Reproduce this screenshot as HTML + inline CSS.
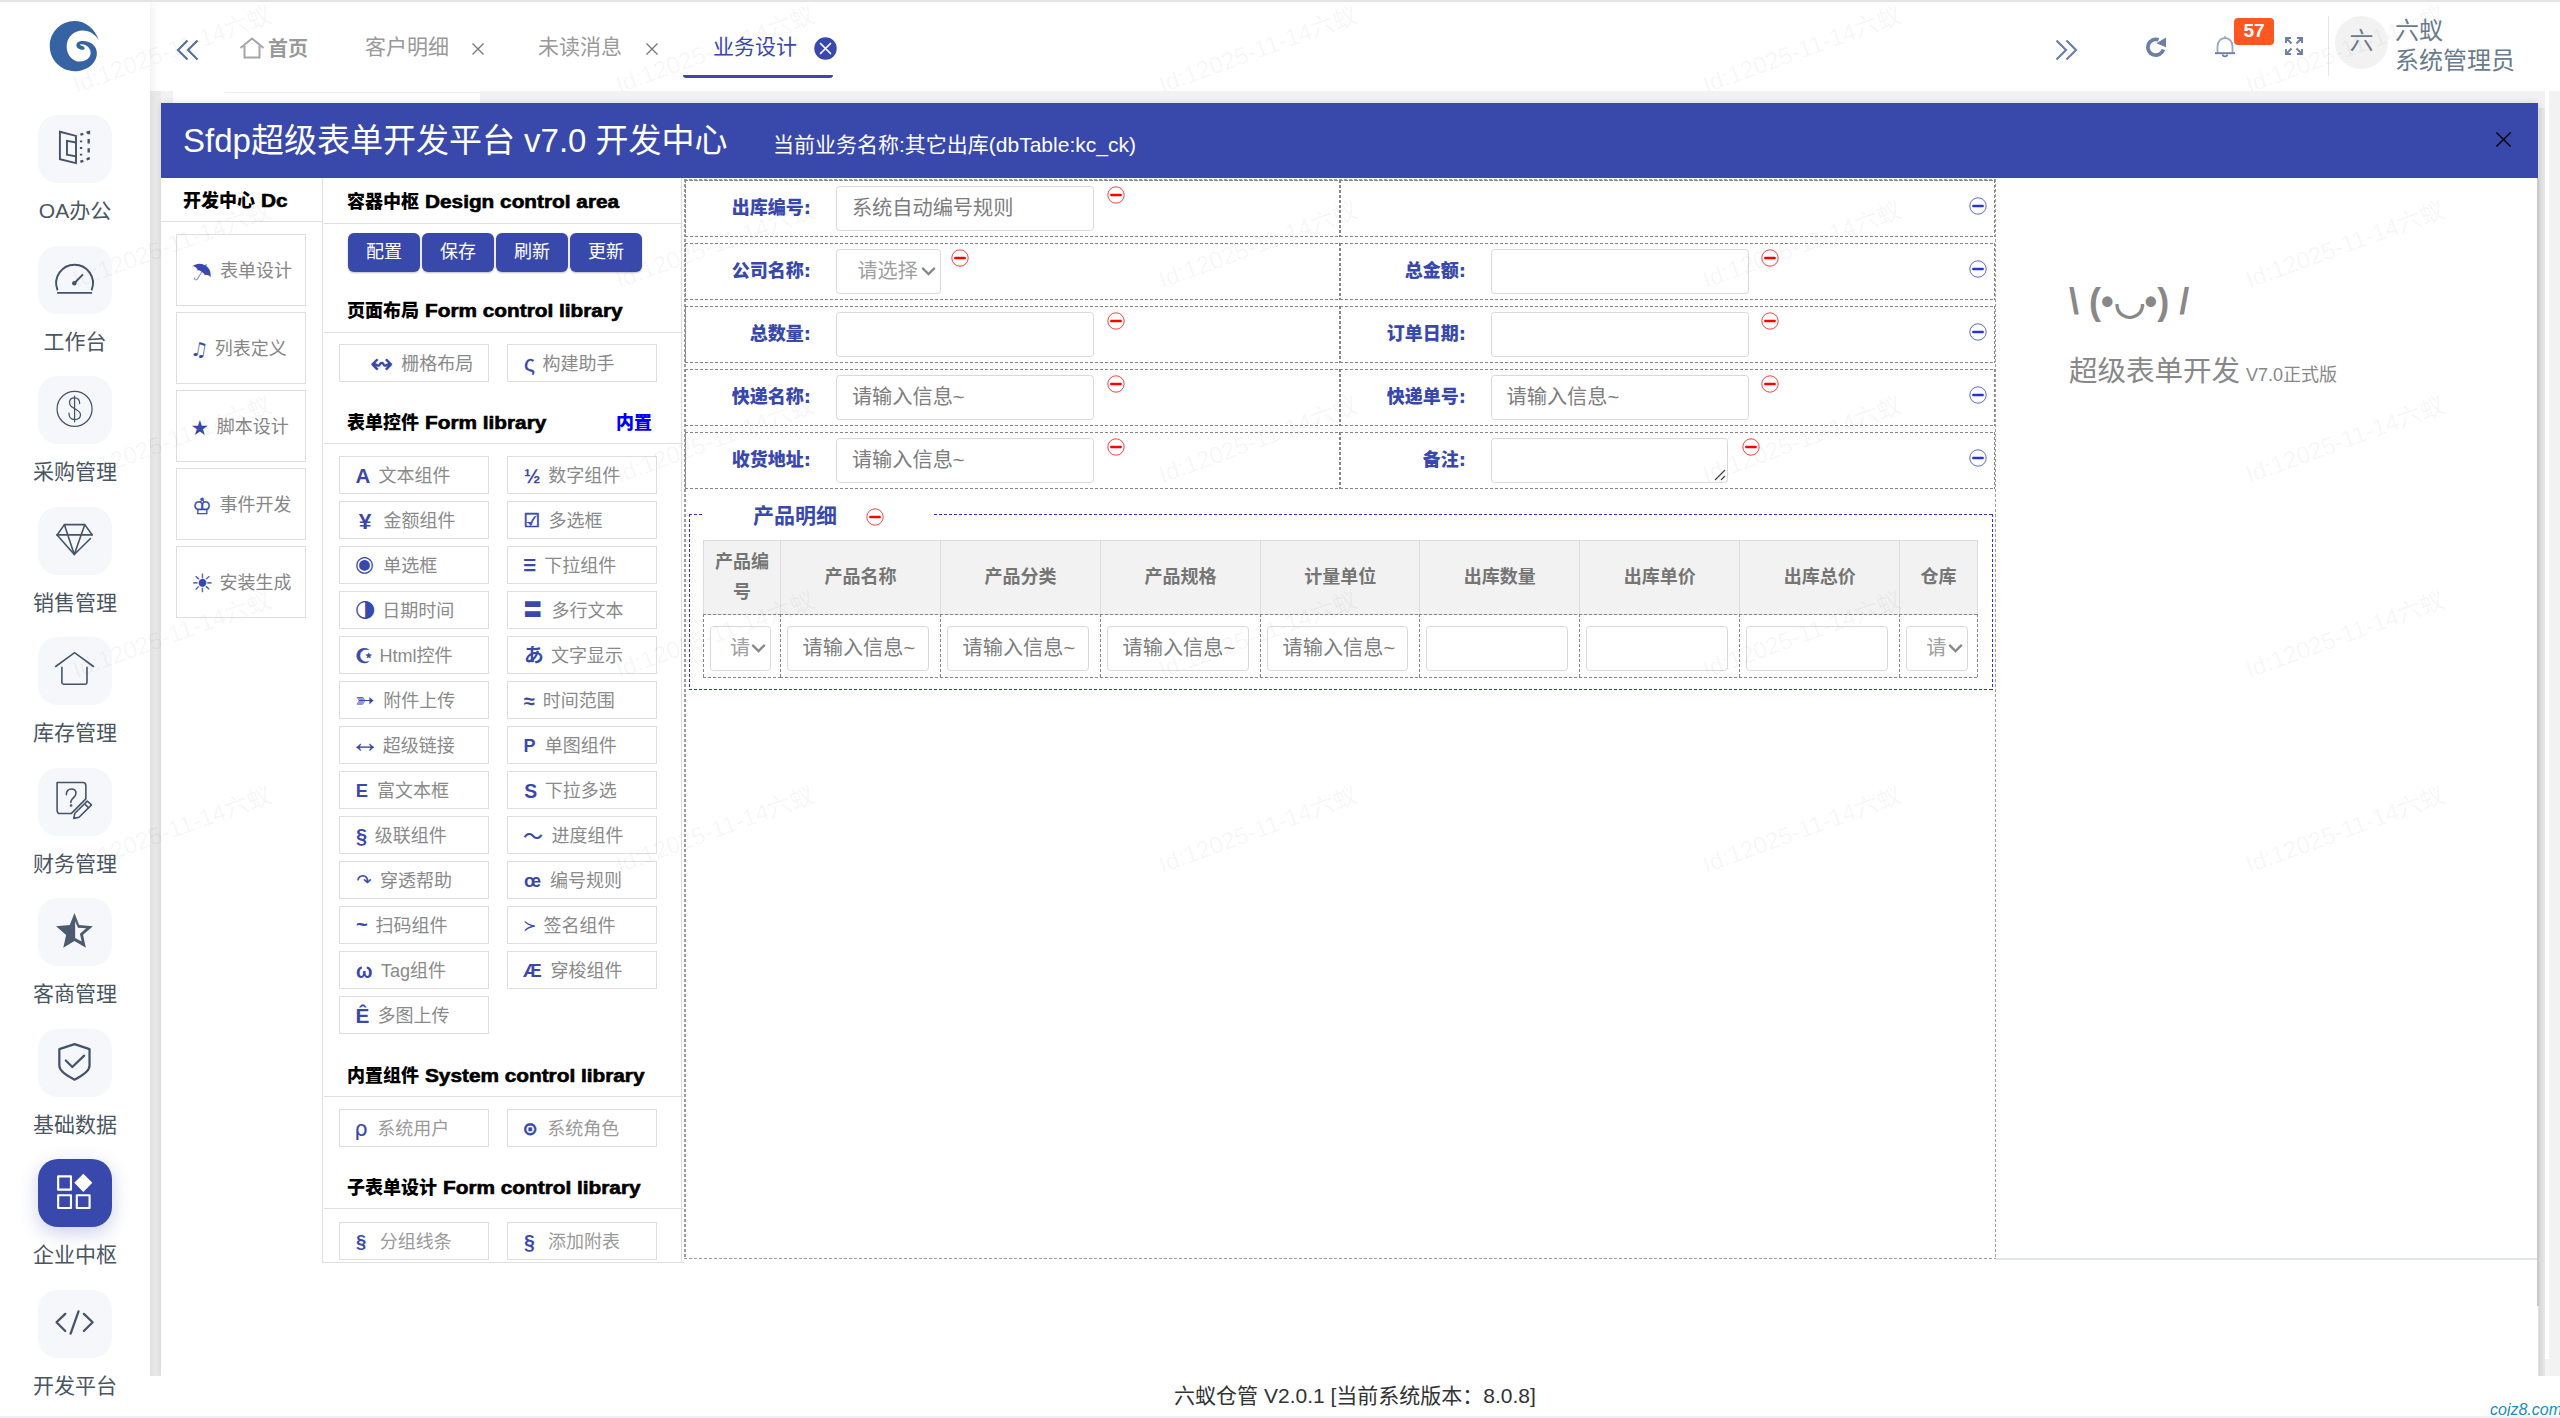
<!DOCTYPE html>
<html lang="zh-CN">
<head>
<meta charset="utf-8">
<title>六蚁仓管</title>
<style>
*{box-sizing:border-box;margin:0;padding:0}
html,body{width:2560px;height:1418px;overflow:hidden;background:#fff}
body{position:relative;font-family:"Liberation Sans","Noto Sans CJK SC",sans-serif;font-size:21px;color:#333}
.abs{position:absolute}
svg{display:block}
/* ---------- background / layout ---------- */
#graybg{left:150px;top:91px;width:2410px;height:1285px;background:#f2f2f2}
#topline{left:0;top:0;width:2560px;height:2px;background:#e4e4e4;z-index:9}
#header{left:150px;top:2px;width:2410px;height:89px;background:#fff}
#side{left:0;top:2px;width:150px;height:1416px;background:#fff;box-shadow:2px 0 10px rgba(0,0,0,.07);z-index:3}
#sideshade{left:150px;top:91px;width:11px;height:1285px;background:linear-gradient(90deg,#ebebeb,#ededed 50%,#e9e9e9);z-index:1}
#peek{left:173px;top:91px;width:307px;height:13px;background:#fff}
#peek i{position:absolute;left:52px;top:1px;width:255px;height:1px;background:#ececec}
/* right strips */
#rgap{left:2545px;top:91px;width:4px;height:1268px;background:#fff}
#rgap2{left:2545px;top:1359px;width:4px;height:18px;background:#f4f4f4}
#rgrad{left:2539px;top:108px;width:6px;height:1269px;background:linear-gradient(90deg,#d6d6d6,#e9e9e9);z-index:3}
#rbar{left:2549px;top:91px;width:11px;height:1283px;background:#f2f2f2}
#rline{left:2537px;top:178px;width:2px;height:1128px;background:#c9c9c9;z-index:3}
.wm{position:absolute;width:260px;height:30px;margin:-15px 0 0 -130px;text-align:center;font-size:24px;line-height:30px;color:rgba(0,0,0,.05);white-space:nowrap;transform:rotate(-20deg);z-index:30}
/* ---------- sidebar ---------- */
.nav{position:absolute;left:0;width:150px;height:130px;text-align:center}
.nav .box{position:absolute;left:38px;top:0;width:74px;height:68px;border-radius:20px;background:#f5f7fb}
.nav .box svg{position:absolute;left:14px;top:11px;width:46px;height:46px}
.nav .lb{position:absolute;left:0;top:81px;width:150px;font-size:21px;line-height:30px;color:#4a5563;white-space:nowrap}
.nav.on .box{background:#3949ab;box-shadow:0 6px 18px rgba(57,73,171,.25)}
/* ---------- tabs ---------- */
.tab{position:absolute;top:31px;font-size:21px;line-height:32px;color:#999;white-space:nowrap}
.usr{position:absolute;left:2395px;margin-top:1px;font-size:24px;line-height:30px;color:#6b7b8d;white-space:nowrap}
/* ---------- modal ---------- */
#modal{left:161px;top:103px;width:2377px;height:1273px;background:#fff;box-shadow:1px 1px 8px rgba(0,0,0,.14);z-index:2}
#mtitle{left:0;top:0;width:2377px;height:75px;background:#3949ab;color:#fff}
#mtitle .t1{position:absolute;left:22px;top:15px;font-size:33px;line-height:46px;white-space:nowrap}
#mtitle .t2{position:absolute;left:612px;top:27px;font-size:21px;line-height:30px;white-space:nowrap}
.hh{position:absolute;font-family:"Liberation Sans","Noto Sans CJK SC",sans-serif;font-weight:900;font-size:18px;line-height:28px;color:#000;white-space:nowrap}
.hh span{display:inline-block;margin-left:1px;transform:scaleX(1.155);transform-origin:0 50%;-webkit-text-stroke:.6px #000}
.hl{position:absolute;height:1px;background:#dfdfdf}
.vl{position:absolute;width:1px;background:#dfdfdf}
/* left list */
.dc{position:absolute;left:15px;width:130px;height:72px;border:1px solid #dedede;font-size:18px;line-height:73px;color:#868686;white-space:nowrap}
.dc b,.it b{position:absolute;font-family:"Liberation Sans","DejaVu Sans","Noto Sans CJK SC",sans-serif;font-weight:bold;color:#3949ab;font-size:18px}
.dc span,.it span{position:absolute;top:0}
/* buttons */
.btn{position:absolute;top:130px;width:72px;height:39px;border-radius:6px;background:#3949ab;color:#fff;font-size:18px;line-height:38px;text-align:center;box-shadow:0 1px 2px rgba(0,0,0,.25)}
/* library items */
.it{position:absolute;width:150px;height:38px;border:1px solid #dedede;font-size:18px;line-height:38px;color:#8a8a8a;white-space:nowrap}
.it.lt{color:#9a9a9a}
.it.c1{left:178px}.it.c2{left:346px}
/* form area */
.dash{background:
 repeating-linear-gradient(90deg,#868686 0 3px,transparent 3px 5px) top left/100% 1px no-repeat,
 repeating-linear-gradient(90deg,#868686 0 3px,transparent 3px 5px) bottom left/100% 1px no-repeat,
 repeating-linear-gradient(180deg,#868686 0 3px,transparent 3px 5px) top left/1px 100% no-repeat,
 repeating-linear-gradient(180deg,#868686 0 3px,transparent 3px 5px) top right/1px 100% no-repeat}
.dash2{background:
 repeating-linear-gradient(90deg,#9c9c9c 0 3px,transparent 3px 5px) top left/100% 2px no-repeat,
 repeating-linear-gradient(90deg,#9c9c9c 0 3px,transparent 3px 5px) bottom left/100% 1px no-repeat,
 repeating-linear-gradient(180deg,#9c9c9c 0 3px,transparent 3px 5px) top left/2px 100% no-repeat,
 repeating-linear-gradient(180deg,#9c9c9c 0 3px,transparent 3px 5px) top right/1px 100% no-repeat}
.bdash{background:
 repeating-linear-gradient(90deg,#2a35c9 0 3px,transparent 3px 5px) top left/100% 1px no-repeat,
 repeating-linear-gradient(90deg,#2a35c9 0 3px,transparent 3px 5px) bottom left/100% 1px no-repeat,
 repeating-linear-gradient(180deg,#2a35c9 0 3px,transparent 3px 5px) top left/1px 100% no-repeat,
 repeating-linear-gradient(180deg,#2a35c9 0 3px,transparent 3px 5px) top right/1px 100% no-repeat}
.vdash{width:2px;background:repeating-linear-gradient(180deg,#868686 0 3px,transparent 3px 5px)}
.flab{position:absolute;font-size:18px;line-height:28px;font-weight:900;color:#3949ab;text-align:right;white-space:nowrap;font-family:"Noto Sans CJK SC",sans-serif}
.finp{position:absolute;height:45px;border:1px solid #d9d9d9;border-radius:3.5px;background:#fff;font-size:20.2px;line-height:43px;padding-left:14.5px;color:#7d7d7d;white-space:nowrap;overflow:hidden}
.fsel{padding-left:20px;color:#a0a0a0}
.fsel svg{position:absolute;right:4px;top:16px;width:15px;height:10px;stroke-width:1.8}
.th{position:absolute;background:#f2f2f2;border:1px solid #dcdcdc;font-size:18px;line-height:30px;font-weight:bold;color:#757575;display:flex;align-items:center;justify-content:center;text-align:center;padding:0 10px}
.flab i{font-style:normal;font-family:"DejaVu Sans",sans-serif;font-weight:bold}
</style>
</head>
<body>
<div class="abs" id="graybg"></div>
<div class="abs" id="header"></div>
<div class="abs" id="peek"><i></i></div>
<div class="abs" id="sideshade"></div>
<div class="abs" id="rgap"></div>
<div class="abs" id="rgap2"></div>
<div class="abs" id="rgrad"></div>
<div class="abs" id="rbar"></div>
<div class="abs" id="topline"></div>
<div class="abs" id="side">
<svg class="abs" style="left:30px;top:8px;width:90px;height:80px" viewBox="0 0 1595 1418"><path fill="#3563a3" d="M1218 535C1150 330 980 195 790 195C545 195 350 395 350 640C350 885 545 1085 790 1085C1010 1085 1185 940 1185 765C1185 640 1080 550 940 548C860 547 822 580 822 625C822 675 880 705 935 705C960 705 970 690 968 672C965 650 940 640 910 632C890 627 880 615 895 608C980 590 1075 670 1075 755C1075 850 990 915 890 915C750 915 650 790 650 645C650 480 780 365 930 365C1060 365 1160 440 1218 535Z"/></svg>
<div class="nav" style="top:113px"><div class="box"></div><svg class="abs" style="left:30px;top:-10px;width:90px;height:80px" viewBox="0 0 1595 1418" fill="none" stroke="#44536a" stroke-width="34" stroke-linecap="round" stroke-linejoin="round" ><path d="M530 475L815 548V1030L530 960Z" stroke-linejoin="miter"/><path d="M815 665L655 635V880L815 910" stroke-linejoin="miter"/><path d="M893 526L945 510M1003 492L1045 480V520M1040 602V682M1040 768V842M1040 928V952L1003 966M893 1006L945 990M905 628V662M905 744V780M905 862V896" stroke-width="42" stroke-linecap="butt" stroke-linejoin="miter"/></svg><div class="lb">OA办公</div></div>
<div class="nav" style="top:244px"><div class="box"></div><svg class="abs" style="left:30px;top:-10px;width:90px;height:80px" viewBox="0 0 1595 1418" fill="none" stroke="#44536a" stroke-width="34" stroke-linecap="round" stroke-linejoin="round" ><path d="M485 950A326 326 0 1 1 1095 950"/><path d="M480 1008H1100" stroke-linecap="butt"/><path d="M785 838L930 690"/><circle cx="785" cy="838" r="40" fill="#44536a" stroke="none"/></svg><div class="lb">工作台</div></div>
<div class="nav" style="top:374px"><div class="box"></div><svg class="abs" style="left:30px;top:-10px;width:90px;height:80px" viewBox="0 0 1595 1418" fill="none" stroke="#44536a" stroke-linecap="round" stroke-linejoin="round" stroke-width="22"><circle cx="790" cy="760" r="310"/><path d="M790 535V990"/><path d="M880 665C880 600 840 565 790 565C730 565 700 600 700 650C700 720 770 740 800 760C850 790 895 810 895 860C895 920 850 950 790 950C730 950 690 910 690 835"/></svg><div class="lb">采购管理</div></div>
<div class="nav" style="top:505px"><div class="box"></div><svg class="abs" style="left:30px;top:-10px;width:90px;height:80px" viewBox="0 0 1595 1418" fill="none" stroke="#44536a" stroke-linecap="round" stroke-linejoin="round" stroke-width="28"><path d="M480 673L610 490H970L1100 670"/><path d="M480 672H1100"/><path d="M480 675L785 1020L1072 735"/><path d="M610 490L785 1020L970 490"/></svg><div class="lb">销售管理</div></div>
<div class="nav" style="top:635px"><div class="box"></div><svg class="abs" style="left:30px;top:-10px;width:90px;height:80px" viewBox="0 0 1595 1418" fill="none" stroke="#44536a" stroke-linecap="round" stroke-linejoin="round" stroke-width="28"><path d="M455 700L790 455L1125 700" stroke-linejoin="miter"/><path d="M565 715V985Q565 1015 595 1015H980Q1010 1015 1010 985V715"/></svg><div class="lb">库存管理</div></div>
<div class="nav" style="top:766px"><div class="box"></div><svg class="abs" style="left:30px;top:-10px;width:90px;height:80px" viewBox="0 0 1595 1418" fill="none" stroke="#44536a" stroke-linecap="round" stroke-linejoin="round" stroke-width="28"><path d="M480 435H935Q990 435 990 490V725L730 985H540Q480 985 480 925Z"/><path d="M645 650C640 580 690 550 730 550C790 550 815 590 815 625C815 680 770 700 745 730C725 755 722 770 722 790"/><circle cx="728" cy="842" r="24" fill="#44536a" stroke="none"/><path d="M1015 765L1090 830L870 1050L775 1070L795 980Z"/><path d="M985 830L1035 880"/></svg><div class="lb">财务管理</div></div>
<div class="nav" style="top:896px"><div class="box"></div><svg class="abs" style="left:30px;top:-10px;width:90px;height:80px" viewBox="0 0 1595 1418" fill="none" stroke="#44536a" stroke-width="34" stroke-linecap="round" stroke-linejoin="round" ><path d="M788 445L870 655L1115 680L940 830L990 1060L788 940L590 1060L640 835L462 680L705 655Z" fill="#4c5b6f" stroke="none"/><path d="M800 590L850 705L995 715L885 810L915 950L800 885Z" fill="#f5f7fb" stroke="none"/></svg><div class="lb">客商管理</div></div>
<div class="nav" style="top:1027px"><div class="box"></div><svg class="abs" style="left:30px;top:-10px;width:90px;height:80px" viewBox="0 0 1595 1418" fill="none" stroke="#44536a" stroke-linecap="round" stroke-linejoin="round" stroke-width="40"><path d="M790 445L1055 535V830C1055 930 900 1020 790 1075C680 1020 520 930 520 830V535Z"/><path d="M635 735L750 850L960 650"/></svg><div class="lb">基础数据</div></div>
<div class="nav on" style="top:1157px"><div class="box"></div><svg class="abs" style="left:30px;top:-10px;width:90px;height:80px" viewBox="0 0 1595 1418" fill="none" stroke="#fff" stroke-linecap="round" stroke-linejoin="round" stroke-width="38" stroke-linejoin="miter"><rect x="499" y="484" width="227" height="237"/><rect x="499" y="819" width="227" height="227"/><rect x="829" y="819" width="227" height="227"/><path d="M945 440L1105 600L945 760L785 600Z" fill="#fff" stroke="none"/></svg><div class="lb">企业中枢</div></div>
<div class="nav" style="top:1288px"><div class="box"></div><svg class="abs" style="left:30px;top:-10px;width:90px;height:80px" viewBox="0 0 1595 1418" fill="none" stroke="#44536a" stroke-linecap="round" stroke-linejoin="round" stroke-width="40" stroke-linejoin="miter"><path d="M625 600L470 750L625 905"/><path d="M860 555L720 950"/><path d="M955 600L1110 750L955 905"/></svg><div class="lb">开发平台</div></div>
</div>
<!-- header -->
<svg class="abs" style="left:175px;top:38px;width:26px;height:24px" viewBox="0 0 26 24" fill="none" stroke="#58719a" stroke-width="2.2"><path d="M12.5 2.5L3 12L12.5 21.5"/><path d="M22.5 2.5L13 12L22.5 21.5"/></svg>
<svg class="abs" style="left:238px;top:35px;width:28px;height:26px" viewBox="0 0 28 26" fill="none" stroke="#a6a6a6" stroke-width="2"><path d="M2.5 13L14 3.5L25.5 13"/><path d="M6.5 11V22.5H21.5V11"/></svg>
<div class="tab" style="left:268px;top:33px;font-weight:bold;font-size:20px">首页</div>
<div class="tab" style="left:365px">客户明细</div>
<svg class="abs" style="left:471px;top:42px;width:14px;height:14px" viewBox="0 0 14 14" stroke="#777" stroke-width="1.3"><path d="M1.5 1.5L12.5 12.5M12.5 1.5L1.5 12.5"/></svg>
<div class="tab" style="left:538px">未读消息</div>
<svg class="abs" style="left:645px;top:42px;width:14px;height:14px" viewBox="0 0 14 14" stroke="#777" stroke-width="1.3"><path d="M1.5 1.5L12.5 12.5M12.5 1.5L1.5 12.5"/></svg>
<div class="tab" style="left:713px;color:#3949ab">业务设计</div>
<svg class="abs" style="left:814px;top:37px;width:23px;height:23px" viewBox="0 0 23 23"><circle cx="11.5" cy="11.5" r="11.2" fill="#3949ab"/><path d="M6.5 6.5L16.5 16.5M16.5 6.5L6.5 16.5" stroke="#fff" stroke-width="1.7" stroke-linecap="round"/></svg>
<div class="abs" style="left:683px;top:75px;width:150px;height:3px;background:#3949ab;border-radius:0 0 3px 3px"></div>
<!-- right icons -->
<svg class="abs" style="left:2053px;top:38px;width:26px;height:24px" viewBox="0 0 26 24" fill="none" stroke="#6b80a3" stroke-width="2.2"><path d="M3.5 2.5L13 12L3.5 21.5"/><path d="M13.5 2.5L23 12L13.5 21.5"/></svg>
<svg class="abs" style="left:2143px;top:34px;width:26px;height:26px" viewBox="0 0 26 26" fill="none" stroke="#6b80a3"><path d="M20.4 15.4A7.900 7.900 0 1 1 15.500 5.800" stroke-width="3.800"/><path d="M13.3 9.2L23 3.5V13.3Z" fill="#6b80a3" stroke="none"/></svg>
<svg class="abs" style="left:2212px;top:34px;width:26px;height:26px" viewBox="0 0 26 26" fill="none"><path d="M5.5 19V12.5C5.5 7.5 8.7 4 13 4C17.3 4 20.500 7.500 20.500 12.500V19" stroke="#9aa8c2" stroke-width="1.8"/><path d="M3 19.2H23" stroke="#6b80a3" stroke-width="1.9"/><path d="M10.500 20.500A2.600 2.600 0 0 0 15.500 20.500" stroke="#6b80a3" stroke-width="1.8"/><path d="M13 2.300V4" stroke="#9aa8c2" stroke-width="1.800"/></svg>
<div class="abs" style="left:2234px;top:18px;width:40px;height:27px;background:#ff5722;border-radius:4px;color:#fff;font-weight:bold;font-size:19px;line-height:26px;text-align:center">57</div>
<svg class="abs" style="left:2284px;top:36px;width:20px;height:20px" viewBox="0 0 20 20" fill="none" stroke="#6b80a3" stroke-width="1.9"><path d="M2 7V2H7M2 2L7.500 7.500M13 2H18V7M18 2L12.500 7.500M2 13V18H7M2 18L7.500 12.500M18 13V18H13M18 18L12.500 12.500"/></svg>
<div class="abs" style="left:2328px;top:16px;width:1px;height:60px;background:#e2e5ee"></div>
<div class="abs" style="left:2335px;top:16px;width:53px;height:53px;border-radius:50%;background:#f2f2f2;color:#6b7b8d;font-size:24px;line-height:50px;text-align:center">六</div>
<div class="usr" style="top:15px">六蚁</div>
<div class="usr" style="top:45px">系统管理员</div>
<div class="abs" id="modal">
<div class="abs" id="mtitle"><div class="t1">Sfdp超级表单开发平台 v7.0 开发中心</div><div class="t2">当前业务名称:其它出库(dbTable:kc_ck)</div><svg class="abs" style="left:2334px;top:28px;width:17px;height:17px" viewBox="0 0 18 18" stroke="#000" stroke-width="1.4"><path d="M1.5 1.5L16.5 16.5M16.5 1.5L1.5 16.5"/></svg></div>
<div class="hh" style="left:22px;top:84px">开发中心 <span>Dc</span></div>
<div class="hl" style="left:0;top:118px;width:162px"></div>
<div class="vl" style="left:161px;top:75px;height:1085px"></div>
<div class="dc" style="top:131px"><b style="font-size:26.7px;left:12.1px;top:1px;font-family:'DejaVu Sans',sans-serif;transform:rotate(32deg);">☂</b><span style="left:43.0px">表单设计</span></div>
<div class="dc" style="top:209px"><b style="font-size:19.1px;left:14.1px;top:0px;font-family:'DejaVu Sans',sans-serif;transform:skewX(-10deg);">♫</b><span style="left:37.8px">列表定义</span></div>
<div class="dc" style="top:287px"><b style="font-size:20.7px;left:13.5px;top:1px;font-family:'DejaVu Sans',sans-serif;">★</b><span style="left:39.8px">脚本设计</span></div>
<div class="dc" style="top:365px"><b style="font-size:21.8px;left:15.3px;top:1px;font-family:'DejaVu Sans',sans-serif;-webkit-text-stroke:.4px #3949ab;">♔</b><span style="left:42.6px">事件开发</span></div>
<div class="dc" style="top:443px"><b style="font-size:25.5px;left:13.9px;top:0px;font-family:'DejaVu Sans',sans-serif;">☀</b><span style="left:42.6px">安装生成</span></div>
<div class="hh" style="left:186px;top:84.69999999999999px">容器中枢 <span>Design control area</span></div>
<div class="hl" style="left:163px;top:119.5px;width:359px"></div>
<div class="btn" style="left:187px">配置</div>
<div class="btn" style="left:261px">保存</div>
<div class="btn" style="left:335px">刷新</div>
<div class="btn" style="left:409px">更新</div>
<div class="hh" style="left:186px;top:193.7px">页面布局 <span>Form control library</span></div>
<div class="hl" style="left:163px;top:228.5px;width:359px"></div>
<div class="hh" style="left:186px;top:305.9px">表单控件 <span>Form library</span></div><div class="hh" style="left:455px;top:305.9px;color:#00f">内置</div>
<div class="hl" style="left:163px;top:340.2px;width:359px"></div>
<div class="hh" style="left:186px;top:959px">内置组件 <span>System control library</span></div>
<div class="hl" style="left:163px;top:993px;width:359px"></div>
<div class="hh" style="left:186px;top:1071px">子表单设计 <span>Form control library</span></div>
<div class="hl" style="left:163px;top:1105.3px;width:359px"></div>
<div class="it c1" style="top:240.5px"><b style="font-size:27.8px;left:29.9px;top:0px;font-family:'DejaVu Sans',sans-serif;font-weight:normal;">↭</b><span style="left:61.2px">栅格布局</span></div>
<div class="it c2" style="top:240.5px"><b style="font-size:22.4px;left:15.9px;top:0px;font-weight:normal;-webkit-text-stroke:.3px #3949ab;">ς</b><span style="left:34.6px">构建助手</span></div>
<div class="it c1" style="top:353.3px"><b style="font-size:20.5px;left:15.4px;top:0px;">A</b><span style="left:38.4px">文本组件</span></div>
<div class="it c2" style="top:353.3px"><b style="font-size:19.8px;left:16.0px;top:0px;">½</b><span style="left:40.2px">数字组件</span></div>
<div class="it c1" style="top:398.3px"><b style="font-size:22.8px;left:18.8px;top:0px;">¥</b><span style="left:43.6px">金额组件</span></div>
<div class="it c2" style="top:398.3px"><b style="font-size:18.6px;left:15.2px;top:0px;font-family:'DejaVu Sans',sans-serif;-webkit-text-stroke:.7px #3949ab;">☑</b><span style="left:40.6px">多选框</span></div>
<div class="it c1" style="top:443.3px"><b style="font-size:21.6px;left:15.1px;top:-2.7px;font-family:'DejaVu Sans',sans-serif;font-weight:normal;">◉</b><span style="left:43.2px">单选框</span></div>
<div class="it c2" style="top:443.3px"><b style="font-size:23.0px;left:15.0px;top:0px;transform:scaleY(1.3);transform-origin:50% 62%;">≡</b><span style="left:36.2px">下拉组件</span></div>
<div class="it c1" style="top:488.3px"><b style="font-size:23.5px;left:15.1px;top:-3px;font-family:'DejaVu Sans',sans-serif;font-weight:normal;">◑</b><span style="left:42.2px">日期时间</span></div>
<div class="it c2" style="top:488.3px"><b style="font-size:19.4px;left:14.9px;top:-2px;font-family:'Noto Sans CJK SC',sans-serif;">〓</b><span style="left:43.4px">多行文本</span></div>
<div class="it c1" style="top:533.3px"><b style="font-size:20.2px;left:15.1px;top:0px;font-family:'DejaVu Sans',sans-serif;-webkit-text-stroke:.5px #3949ab;">☪</b><span style="left:39.4px">Html控件</span></div>
<div class="it c2" style="top:533.3px"><b style="font-size:19.8px;left:15.9px;top:-2px;font-family:'Noto Sans CJK SC',sans-serif;">あ</b><span style="left:43.0px">文字显示</span></div>
<div class="it c1" style="top:578.3px"><b style="font-size:23.5px;left:15.1px;top:-1px;font-family:'DejaVu Sans',sans-serif;">➳</b><span style="left:43.2px">附件上传</span></div>
<div class="it c2" style="top:578.3px"><b style="font-size:20.2px;left:15.6px;top:-0.5px;">≈</b><span style="left:34.8px">时间范围</span></div>
<div class="it c1" style="top:623.3px"><b style="font-size:30.1px;left:10.1px;top:-4.4px;font-family:'Liberation Sans',sans-serif;font-weight:normal;">↔</b><span style="left:42.8px">超级链接</span></div>
<div class="it c2" style="top:623.3px"><b style="font-size:18px;left:15.5px;top:0px;">P</b><span style="left:36.8px">单图组件</span></div>
<div class="it c1" style="top:668.3px"><b style="font-size:18.4px;left:15.8px;top:0px;">E</b><span style="left:37.0px">富文本框</span></div>
<div class="it c2" style="top:668.3px"><b style="font-size:19.4px;left:16.2px;top:0px;">S</b><span style="left:36.8px">下拉多选</span></div>
<div class="it c1" style="top:713.3px"><b style="font-size:20.0px;left:15.9px;top:0px;">§</b><span style="left:34.8px">级联组件</span></div>
<div class="it c2" style="top:713.3px"><b style="font-size:20.0px;left:15.0px;top:0px;font-family:'Noto Sans CJK SC',sans-serif;font-weight:500;">～</b><span style="left:43.6px">进度组件</span></div>
<div class="it c1" style="top:758.3px"><b style="font-size:18px;left:16.4px;top:0px;font-family:'DejaVu Sans',sans-serif;font-weight:normal;">↷</b><span style="left:40.0px">穿透帮助</span></div>
<div class="it c2" style="top:758.3px"><b style="font-size:18px;left:16.0px;top:0px;">œ</b><span style="left:42.0px">编号规则</span></div>
<div class="it c1" style="top:803.3px"><b style="font-size:20.2px;left:15.9px;top:-2.2px;">~</b><span style="left:35.6px">扫码组件</span></div>
<div class="it c2" style="top:803.3px"><b style="font-size:16.0px;left:15.0px;top:0px;font-family:'DejaVu Sans',sans-serif;font-weight:normal;">≻</b><span style="left:35.4px">签名组件</span></div>
<div class="it c1" style="top:848.3px"><b style="font-size:19.5px;left:15.9px;top:0px;">ω</b><span style="left:41.0px">Tag组件</span></div>
<div class="it c2" style="top:848.3px"><b style="font-size:18.7px;left:14.9px;top:0px;">Æ</b><span style="left:42.6px">穿梭组件</span></div>
<div class="it c1" style="top:893.3px"><b style="font-size:20.8px;left:15.4px;top:0px;">Ê</b><span style="left:37.6px">多图上传</span></div>
<div class="it c1 lt" style="top:1005.5px"><b style="font-size:20.6px;left:14.5px;top:0px;font-family:'DejaVu Sans',sans-serif;font-weight:normal;-webkit-text-stroke:.2px #3949ab;">ρ</b><span style="left:37.2px">系统用户</span></div>
<div class="it c2 lt" style="top:1005.5px"><b style="font-size:18px;left:14.5px;top:0px;font-family:'DejaVu Sans',sans-serif;font-weight:bold;-webkit-text-stroke:.5px #3949ab;">⊙</b><span style="left:39.2px">系统角色</span></div>
<div class="it c1 lt" style="top:1118.6px"><b style="font-size:18.4px;left:15.9px;top:0px;">§</b><span style="left:39.8px">分组线条</span></div>
<div class="it c2 lt" style="top:1118.6px"><b style="font-size:19.4px;left:16.1px;top:0px;">§</b><span style="left:40.0px">添加附表</span></div>
<div class="hl" style="left:162px;top:1159px;width:361px"></div>
<div class="vl" style="left:520px;top:75px;height:1085px"></div>
<div class="abs dash2" style="left:523px;top:76px;width:1312px;height:1080px"></div>
<div class="abs dash" style="left:524px;top:77px;width:1310px;height:57px"></div>
<div class="abs vdash" style="left:1178px;top:77px;height:57px"></div>
<div class="flab" style="left:524px;top:89px;width:126px">出库编号<i>:</i></div>
<div class="finp" style="left:675.4px;top:83.4px;width:258px">系统自动编号规则</div>
<svg class="abs" style="left:944.6px;top:82.2px;width:20px;height:20px" viewBox="0 0 20 20"><circle cx="10" cy="10" r="8.2" fill="none" stroke="#f00" stroke-width="1" opacity=".75"/><path d="M5.300 10H14.700" stroke="#f00" stroke-width="2.400" stroke-linecap="round"/></svg>
<svg class="abs" style="left:1807.2px;top:92.5px;width:20px;height:20px" viewBox="0 0 20 20"><circle cx="10" cy="10" r="8.2" fill="none" stroke="#2a35c9" stroke-width="1" opacity=".75"/><path d="M5.300 10H14.700" stroke="#2a35c9" stroke-width="2.400" stroke-linecap="round"/></svg>
<div class="abs dash" style="left:524px;top:140px;width:1310px;height:57px"></div>
<div class="abs vdash" style="left:1178px;top:140px;height:57px"></div>
<div class="flab" style="left:524px;top:152px;width:126px">公司名称<i>:</i></div>
<div class="finp fsel" style="left:675.4px;top:146.4px;width:105px">请选择<svg viewBox="0 0 12 8" fill="none" stroke="#888" stroke-width="1.5"><path d="M1 1.500L6 6.500L11 1.500"/></svg></div>
<svg class="abs" style="left:788.5px;top:145px;width:20px;height:20px" viewBox="0 0 20 20"><circle cx="10" cy="10" r="8.2" fill="none" stroke="#f00" stroke-width="1" opacity=".75"/><path d="M5.300 10H14.700" stroke="#f00" stroke-width="2.400" stroke-linecap="round"/></svg>
<div class="flab" style="left:1179px;top:152px;width:126px">总金额<i>:</i></div>
<div class="finp" style="left:1330.0px;top:146.4px;width:258px"></div>
<svg class="abs" style="left:1599.4px;top:145.2px;width:20px;height:20px" viewBox="0 0 20 20"><circle cx="10" cy="10" r="8.2" fill="none" stroke="#f00" stroke-width="1" opacity=".75"/><path d="M5.300 10H14.700" stroke="#f00" stroke-width="2.400" stroke-linecap="round"/></svg>
<svg class="abs" style="left:1807.2px;top:155.5px;width:20px;height:20px" viewBox="0 0 20 20"><circle cx="10" cy="10" r="8.2" fill="none" stroke="#2a35c9" stroke-width="1" opacity=".75"/><path d="M5.300 10H14.700" stroke="#2a35c9" stroke-width="2.400" stroke-linecap="round"/></svg>
<div class="abs dash" style="left:524px;top:203px;width:1310px;height:57px"></div>
<div class="abs vdash" style="left:1178px;top:203px;height:57px"></div>
<div class="flab" style="left:524px;top:215px;width:126px">总数量<i>:</i></div>
<div class="finp" style="left:675.4px;top:209.4px;width:258px"></div>
<svg class="abs" style="left:944.6px;top:208.2px;width:20px;height:20px" viewBox="0 0 20 20"><circle cx="10" cy="10" r="8.2" fill="none" stroke="#f00" stroke-width="1" opacity=".75"/><path d="M5.300 10H14.700" stroke="#f00" stroke-width="2.400" stroke-linecap="round"/></svg>
<div class="flab" style="left:1179px;top:215px;width:126px">订单日期<i>:</i></div>
<div class="finp" style="left:1330.0px;top:209.4px;width:258px"></div>
<svg class="abs" style="left:1599.4px;top:208.2px;width:20px;height:20px" viewBox="0 0 20 20"><circle cx="10" cy="10" r="8.2" fill="none" stroke="#f00" stroke-width="1" opacity=".75"/><path d="M5.300 10H14.700" stroke="#f00" stroke-width="2.400" stroke-linecap="round"/></svg>
<svg class="abs" style="left:1807.2px;top:218.5px;width:20px;height:20px" viewBox="0 0 20 20"><circle cx="10" cy="10" r="8.2" fill="none" stroke="#2a35c9" stroke-width="1" opacity=".75"/><path d="M5.300 10H14.700" stroke="#2a35c9" stroke-width="2.400" stroke-linecap="round"/></svg>
<div class="abs dash" style="left:524px;top:266px;width:1310px;height:57px"></div>
<div class="abs vdash" style="left:1178px;top:266px;height:57px"></div>
<div class="flab" style="left:524px;top:278px;width:126px">快递名称<i>:</i></div>
<div class="finp" style="left:675.4px;top:272.4px;width:258px">请输入信息~</div>
<svg class="abs" style="left:944.6px;top:271.2px;width:20px;height:20px" viewBox="0 0 20 20"><circle cx="10" cy="10" r="8.2" fill="none" stroke="#f00" stroke-width="1" opacity=".75"/><path d="M5.300 10H14.700" stroke="#f00" stroke-width="2.400" stroke-linecap="round"/></svg>
<div class="flab" style="left:1179px;top:278px;width:126px">快递单号<i>:</i></div>
<div class="finp" style="left:1330.0px;top:272.4px;width:258px">请输入信息~</div>
<svg class="abs" style="left:1599.4px;top:271.2px;width:20px;height:20px" viewBox="0 0 20 20"><circle cx="10" cy="10" r="8.2" fill="none" stroke="#f00" stroke-width="1" opacity=".75"/><path d="M5.300 10H14.700" stroke="#f00" stroke-width="2.400" stroke-linecap="round"/></svg>
<svg class="abs" style="left:1807.2px;top:281.5px;width:20px;height:20px" viewBox="0 0 20 20"><circle cx="10" cy="10" r="8.2" fill="none" stroke="#2a35c9" stroke-width="1" opacity=".75"/><path d="M5.300 10H14.700" stroke="#2a35c9" stroke-width="2.400" stroke-linecap="round"/></svg>
<div class="abs dash" style="left:524px;top:329px;width:1310px;height:57px"></div>
<div class="abs vdash" style="left:1178px;top:329px;height:57px"></div>
<div class="flab" style="left:524px;top:341px;width:126px">收货地址<i>:</i></div>
<div class="finp" style="left:675.4px;top:335.4px;width:258px">请输入信息~</div>
<svg class="abs" style="left:944.6px;top:334.2px;width:20px;height:20px" viewBox="0 0 20 20"><circle cx="10" cy="10" r="8.2" fill="none" stroke="#f00" stroke-width="1" opacity=".75"/><path d="M5.300 10H14.700" stroke="#f00" stroke-width="2.400" stroke-linecap="round"/></svg>
<div class="flab" style="left:1179px;top:341px;width:126px">备注<i>:</i></div>
<div class="finp" style="left:1330.0px;top:335.4px;width:237px"><svg class="abs" style="right:1px;bottom:1px;width:12px;height:12px" viewBox="0 0 12 12" stroke="#444" stroke-width="1.200"><path d="M11 1L1 11M11 7L7 11"/></svg></div>
<svg class="abs" style="left:1579.7px;top:334px;width:20px;height:20px" viewBox="0 0 20 20"><circle cx="10" cy="10" r="8.2" fill="none" stroke="#f00" stroke-width="1" opacity=".75"/><path d="M5.300 10H14.700" stroke="#f00" stroke-width="2.400" stroke-linecap="round"/></svg>
<svg class="abs" style="left:1807.2px;top:344.5px;width:20px;height:20px" viewBox="0 0 20 20"><circle cx="10" cy="10" r="8.2" fill="none" stroke="#2a35c9" stroke-width="1" opacity=".75"/><path d="M5.300 10H14.700" stroke="#2a35c9" stroke-width="2.400" stroke-linecap="round"/></svg>
<div class="abs bdash" style="left:527.5px;top:411px;width:1304.0px;height:175.5px"></div>
<div class="abs" style="left:540.5px;top:402px;width:232.5px;height:24px;background:#fff"></div>
<div class="abs" style="left:592px;top:398px;font-size:21px;line-height:30px;font-weight:bold;color:#3949ab;white-space:nowrap">产品明细</div>
<svg class="abs" style="left:704px;top:404px;width:20px;height:20px" viewBox="0 0 20 20"><circle cx="10" cy="10" r="8.2" fill="none" stroke="#f00" stroke-width="1" opacity=".75"/><path d="M5.300 10H14.700" stroke="#f00" stroke-width="2.400" stroke-linecap="round"/></svg>
<div class="th" style="left:542px;top:437px;width:78px;height:74.5px"><span>产品编号</span></div>
<div class="abs dash" style="left:542px;top:510.5px;width:78px;height:64.3px"></div>
<div class="finp fsel" style="left:549px;top:523px;width:61px;padding-left:19px">请<svg viewBox="0 0 12 8" fill="none" stroke="#888" stroke-width="1.500"><path d="M1 1.500L6 6.500L11 1.500"/></svg></div>
<div class="th" style="left:619px;top:437px;width:161px;height:74.5px"><span>产品名称</span></div>
<div class="abs dash" style="left:619px;top:510.5px;width:161px;height:64.3px"></div>
<div class="finp" style="left:626px;top:523px;width:142px">请输入信息~</div>
<div class="th" style="left:779px;top:437px;width:161px;height:74.5px"><span>产品分类</span></div>
<div class="abs dash" style="left:779px;top:510.5px;width:161px;height:64.3px"></div>
<div class="finp" style="left:786px;top:523px;width:142px">请输入信息~</div>
<div class="th" style="left:939px;top:437px;width:161px;height:74.5px"><span>产品规格</span></div>
<div class="abs dash" style="left:939px;top:510.5px;width:161px;height:64.3px"></div>
<div class="finp" style="left:946px;top:523px;width:142px">请输入信息~</div>
<div class="th" style="left:1099px;top:437px;width:160.29999999999995px;height:74.5px"><span>计量单位</span></div>
<div class="abs dash" style="left:1099px;top:510.5px;width:160.29999999999995px;height:64.3px"></div>
<div class="finp" style="left:1106px;top:523px;width:141.29999999999995px">请输入信息~</div>
<div class="th" style="left:1258.3px;top:437px;width:160.9000000000001px;height:74.5px"><span>出库数量</span></div>
<div class="abs dash" style="left:1258.3px;top:510.5px;width:160.9000000000001px;height:64.3px"></div>
<div class="finp" style="left:1265.3px;top:523px;width:141.9000000000001px"></div>
<div class="th" style="left:1418.2px;top:437px;width:161.0px;height:74.5px"><span>出库单价</span></div>
<div class="abs dash" style="left:1418.2px;top:510.5px;width:161.0px;height:64.3px"></div>
<div class="finp" style="left:1425.2px;top:523px;width:142.0px"></div>
<div class="th" style="left:1578.2px;top:437px;width:161.0px;height:74.5px"><span>出库总价</span></div>
<div class="abs dash" style="left:1578.2px;top:510.5px;width:161.0px;height:64.3px"></div>
<div class="finp" style="left:1585.2px;top:523px;width:142.0px"></div>
<div class="th" style="left:1738.2px;top:437px;width:78.79999999999995px;height:74.5px"><span>仓库</span></div>
<div class="abs dash" style="left:1738.2px;top:510.5px;width:78.79999999999995px;height:64.3px"></div>
<div class="finp fsel" style="left:1745.2px;top:523px;width:61.799999999999955px;padding-left:19px">请<svg viewBox="0 0 12 8" fill="none" stroke="#888" stroke-width="1.500"><path d="M1 1.500L6 6.500L11 1.500"/></svg></div>
<div class="abs" style="left:1908px;top:176px;font-size:36px;line-height:46px;font-weight:bold;color:#888;white-space:nowrap">\ (•◡•) /</div>
<div class="abs" style="left:1908px;top:247px;font-size:28.5px;line-height:42px;color:#888;white-space:nowrap">超级表单开发 <span style="font-size:18px;margin-left:-2px">V7.0正式版</span></div>
<div class="abs" style="left:1835px;top:1155px;width:542px;height:2px;background:#e4e6ee"></div>
</div>
<div class="abs" style="left:150px;top:1376px;width:2410px;height:42px;background:#fff;z-index:4"></div>
<div class="abs" style="left:150px;top:1381px;width:2410px;text-align:center;font-size:21px;line-height:30px;color:#333;z-index:5">六蚁仓管 V2.0.1 [当前系统版本：8.0.8]</div>
<div class="abs" style="left:2490px;top:1398px;font-size:16px;line-height:24px;font-style:italic;color:#1b8cba;white-space:nowrap;z-index:6">cojz8.com</div>
<div class="abs" id="rline"></div>
<div class="abs" style="left:0;top:1416px;width:2560px;height:2px;background:#efeff7;z-index:7"></div>
<div class="wm" style="left:172px;top:50px">Id:12025-11-14六蚁</div>
<div class="wm" style="left:715px;top:50px">Id:12025-11-14六蚁</div>
<div class="wm" style="left:1258px;top:50px">Id:12025-11-14六蚁</div>
<div class="wm" style="left:1801.5px;top:50px">Id:12025-11-14六蚁</div>
<div class="wm" style="left:2345px;top:50px">Id:12025-11-14六蚁</div>
<div class="wm" style="left:172px;top:245px">Id:12025-11-14六蚁</div>
<div class="wm" style="left:715px;top:245px">Id:12025-11-14六蚁</div>
<div class="wm" style="left:1258px;top:245px">Id:12025-11-14六蚁</div>
<div class="wm" style="left:1801.5px;top:245px">Id:12025-11-14六蚁</div>
<div class="wm" style="left:2345px;top:245px">Id:12025-11-14六蚁</div>
<div class="wm" style="left:172px;top:440px">Id:12025-11-14六蚁</div>
<div class="wm" style="left:715px;top:440px">Id:12025-11-14六蚁</div>
<div class="wm" style="left:1258px;top:440px">Id:12025-11-14六蚁</div>
<div class="wm" style="left:1801.5px;top:440px">Id:12025-11-14六蚁</div>
<div class="wm" style="left:2345px;top:440px">Id:12025-11-14六蚁</div>
<div class="wm" style="left:172px;top:635px">Id:12025-11-14六蚁</div>
<div class="wm" style="left:715px;top:635px">Id:12025-11-14六蚁</div>
<div class="wm" style="left:1258px;top:635px">Id:12025-11-14六蚁</div>
<div class="wm" style="left:1801.5px;top:635px">Id:12025-11-14六蚁</div>
<div class="wm" style="left:2345px;top:635px">Id:12025-11-14六蚁</div>
<div class="wm" style="left:172px;top:830px">Id:12025-11-14六蚁</div>
<div class="wm" style="left:715px;top:830px">Id:12025-11-14六蚁</div>
<div class="wm" style="left:1258px;top:830px">Id:12025-11-14六蚁</div>
<div class="wm" style="left:1801.5px;top:830px">Id:12025-11-14六蚁</div>
<div class="wm" style="left:2345px;top:830px">Id:12025-11-14六蚁</div>
</body>
</html>
